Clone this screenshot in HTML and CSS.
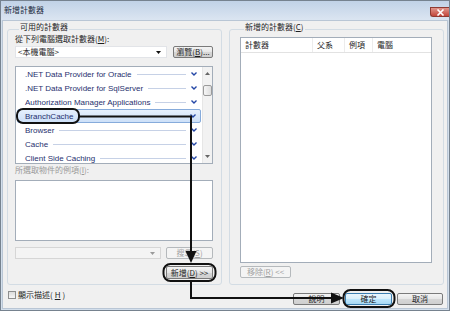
FILE: index.html
```html
<!DOCTYPE html>
<html>
<head lang="zh-Hant">
	<meta charset="utf-8">
	<title>新增計數器</title>
	<link rel="stylesheet" href="styles.css">
</head>
<body>

	<div class="window">
		<div class="titlebar">
			<span class="title">新增計數器</span>
			<span class="close">
				<svg width="9" height="7" viewBox="0 0 9 7"><path d="M1.5 0.5 L7.5 6.5 M7.5 0.5 L1.5 6.5" stroke="#fff" stroke-width="1.6"/></svg>
			</span>
		</div>

		<div class="client">
			<div class="groups">

				<!-- available counters -->
				<section class="group left">
					<div class="group-title">可用的計數器</div>
					<div class="label">從下列電腦選取計數器(<u>M</u>):</div>
					<div class="row">
						<div class="combo">&lt;本機電腦&gt;
							<svg class="drop" width="5" height="3" viewBox="0 0 5 3"><path d="M0 0 H5 L2.5 3 Z" fill="#111"/></svg>
						</div>
						<button class="btn browse">瀏覽(<u>B</u>)...</button>
					</div>

					<div class="counter-list">
						<ul class="items">
							<li><span class="name">.NET Data Provider for Oracle</span><span class="rule"></span><svg class="chev" width="6" height="4" viewBox="0 0 6 4"><path d="M0.5 0.5 L3 3 L5.5 0.5" fill="none" stroke="#2447a6" stroke-width="1.4"/></svg></li>
							<li><span class="name">.NET Data Provider for SqlServer</span><span class="rule"></span><svg class="chev" width="6" height="4" viewBox="0 0 6 4"><path d="M0.5 0.5 L3 3 L5.5 0.5" fill="none" stroke="#2447a6" stroke-width="1.4"/></svg></li>
							<li><span class="name">Authorization Manager Applications</span><span class="rule"></span><svg class="chev" width="6" height="4" viewBox="0 0 6 4"><path d="M0.5 0.5 L3 3 L5.5 0.5" fill="none" stroke="#2447a6" stroke-width="1.4"/></svg></li>
							<li class="selected"><span class="name">BranchCache</span><span class="rule"></span><svg class="chev" width="6" height="4" viewBox="0 0 6 4"><path d="M0.5 0.5 L3 3 L5.5 0.5" fill="none" stroke="#2447a6" stroke-width="1.4"/></svg></li>
							<li><span class="name">Browser</span><span class="rule"></span><svg class="chev" width="6" height="4" viewBox="0 0 6 4"><path d="M0.5 0.5 L3 3 L5.5 0.5" fill="none" stroke="#2447a6" stroke-width="1.4"/></svg></li>
							<li><span class="name">Cache</span><span class="rule"></span><svg class="chev" width="6" height="4" viewBox="0 0 6 4"><path d="M0.5 0.5 L3 3 L5.5 0.5" fill="none" stroke="#2447a6" stroke-width="1.4"/></svg></li>
							<li><span class="name">Client Side Caching</span><span class="rule"></span><svg class="chev" width="6" height="4" viewBox="0 0 6 4"><path d="M0.5 0.5 L3 3 L5.5 0.5" fill="none" stroke="#2447a6" stroke-width="1.4"/></svg></li>
						</ul>
						<div class="scrollbar">
							<svg class="arrow-up" width="5" height="3" viewBox="0 0 5 3"><path d="M0 3 H5 L2.5 0 Z" fill="#666"/></svg>
							<div class="thumb"></div>
							<svg class="arrow-down" width="5" height="3" viewBox="0 0 5 3"><path d="M0 0 H5 L2.5 3 Z" fill="#666"/></svg>
						</div>
					</div>

					<div class="label dim">所選取物件的例項(<u>I</u>):</div>
					<div class="instances"></div>
					<div class="row row-search">
						<div class="combo off">
							<svg class="drop" width="5" height="3" viewBox="0 0 5 3"><path d="M0 0 H5 L2.5 3 Z" fill="#9a9a9a"/></svg>
						</div>
						<button class="btn search" disabled>搜尋(<u>S</u>)</button>
					</div>
					<button class="btn add">新增(<u>D</u>) &gt;&gt;</button>
				</section>

				<!-- added counters -->
				<section class="group right">
					<div class="group-title">新增的計數器(<u>C</u>)</div>
					<div class="added-list">
						<div class="head">
							<span class="col c1">計數器</span>
							<span class="col c2">父系</span>
							<span class="col c3">例項</span>
							<span class="col c4">電腦</span>
						</div>
					</div>
					<button class="btn remove" disabled>移除(<u>R</u>) &lt;&lt;</button>
				</section>

			</div>

			<div class="footer">
				<label class="check"><span class="box"></span>顯示描述(<u>H</u>)</label>
				<div class="actions">
					<button class="btn">說明</button>
					<button class="btn default">確定</button>
					<button class="btn">取消</button>
				</div>
			</div>
		</div>

		<!-- callout marks drawn over the dialog -->
		<svg class="notes" width="450" height="312" viewBox="0 0 450 312">
			<g fill="none" stroke="#111" stroke-width="2">
				<rect x="17" y="109" width="62" height="14" rx="6"/>
				<path d="M79 116.5 H191 V252"/>
				<rect x="163.5" y="264" width="52" height="17" rx="7"/>
				<path d="M191 281 V298 H332"/>
				<rect x="343.5" y="290" width="51" height="17" rx="7"/>
			</g>
			<g fill="#111">
				<polygon points="185.5,251 196.5,251 191,263"/>
				<polygon points="331,292.5 331,303.5 344,298"/>
			</g>
		</svg>
	</div>

</body>
</html>
```

FILE: styles.css
```css
* {
	margin: 0;
	padding: 0;
	box-sizing: border-box;
}

body {
	width: 450px;
	height: 312px;
	overflow: hidden;
	background: #fff;
	font-family: "Noto Sans CJK TC", "Liberation Sans", sans-serif;
	font-size: 8px;
	color: #1e1e1e;
}

u {
	text-decoration: underline;
}

.window {
	position: relative;
	width: 450px;
	height: 311px;
	border: 1px solid #76828f;
	background: #d3dfec;
	display: flex;
	flex-direction: column;
}

/* title bar */
.titlebar {
	height: 19px;
	flex: none;
	display: flex;
	justify-content: space-between;
	align-items: flex-start;
	background: linear-gradient(#c1d2e7, #dbe5f1);
}

.title {
	line-height: 12px;
	margin: 3px 0 0 3px;
	color: #1b2a3c;
}

.close {
	width: 19px;
	height: 10px;
	margin-top: 6px;
	display: flex;
	align-items: center;
	justify-content: center;
	background: linear-gradient(#e0958c, #c3473c);
	border: 1px solid #8e3b33;
	border-right: 0;
	border-radius: 0 0 0 3px;
}

/* dialog body */
.client {
	flex: 1;
	margin: 0 1px 1px;
	border: 1px solid #b9c6d5;
	background: #f0f0f0;
	display: flex;
	flex-direction: column;
}

.groups {
	display: flex;
	gap: 7px;
	margin: 8px 0 0 4px;
}

.group {
	width: 215px;
	height: 256px;
	border: 1px solid #d3dce4;
	border-radius: 3px;
	display: flex;
	flex-direction: column;
}

.group-title {
	align-self: flex-start;
	margin: -9px 0 0 4px;
	padding: 0 1px;
	line-height: 12px;
	background: #f0f0f0;
}

.left {
	padding: 0 8px 0 7px;
}

.right {
	padding: 0 11px 0 10px;
}

.label {
	line-height: 12px;
}

.label.dim {
	color: #9b9b9b;
}

.row {
	display: flex;
	justify-content: space-between;
	height: 12px;
	margin-top: 1px;
}

.row-search {
	margin-top: 6px;
}

.combo {
	position: relative;
	width: 152px;
	height: 12px;
	padding-left: 2px;
	line-height: 10px;
	background: #fff;
	border: 1px solid #e2e4e8;
}

.combo .drop {
	position: absolute;
	right: 5px;
	top: 4px;
}

.combo.off {
	width: 146px;
	background: #f4f4f4;
	border-color: #d6d6d6;
}

/* buttons */
.btn {
	height: 12px;
	font: inherit;
	line-height: 10px;
	color: #1e1e1e;
	border: 1px solid #7a7a7a;
	border-radius: 2px;
	background: linear-gradient(#f4f4f4 0%, #e6e6e6 50%, #d6d6d6 51%, #cfcfcf 100%);
	text-align: center;
}

.btn:disabled {
	color: #a2a2a2;
	border-color: #b5b9bc;
	background: #f4f4f4;
}

.browse {
	width: 40px;
}

.search {
	width: 47px;
}

.add {
	align-self: flex-end;
	width: 47px;
	height: 13px;
	margin-top: 7px;
}

.remove {
	width: 51px;
	margin-top: 3px;
}

/* counter list */
.counter-list {
	margin-top: 8px;
	height: 98px;
	border: 1px solid #a3adb9;
	background: #fff;
	display: flex;
	overflow: hidden;
}

.items {
	flex: 1;
	list-style: none;
	font-family: "Liberation Sans", sans-serif;
	color: #27306e;
}

.items li {
	height: 14px;
	display: flex;
	align-items: center;
	padding: 0 5px 0 9px;
	white-space: nowrap;
}

.items .rule {
	flex: 1;
	height: 1px;
	margin: 0 5px;
	background: #c6d1e6;
}

.items .chev {
	flex: none;
}

.items li.selected {
	margin: 0 1px;
	padding: 0 4px 0 7px;
	border: 1px solid #86abdb;
	border-radius: 2px;
	background: linear-gradient(#e6f0fd, #cde0f8);
}

.items li.selected .rule {
	visibility: hidden;
}

.scrollbar {
	width: 10px;
	display: flex;
	flex-direction: column;
	align-items: center;
	background: #f2f2f2;
	border-left: 1px solid #e6e6e6;
}

.arrow-up {
	margin-top: 5px;
}

.thumb {
	width: 9px;
	height: 11px;
	margin-top: 10px;
	border: 1px solid #9b9b9b;
	border-radius: 2px;
	background: linear-gradient(to right, #f6f6f6, #dedede);
}

.arrow-down {
	margin-top: auto;
	margin-bottom: 5px;
}

.instances {
	margin-top: 4px;
	height: 61px;
	border: 1px solid #a3adb9;
	background: #fff;
}

/* added counters table */
.added-list {
	margin-top: 4px;
	height: 226px;
	border: 1px solid #a3adb9;
	background: #fff;
}

.head {
	display: flex;
	height: 15px;
	border-bottom: 1px solid #e2e2e2;
}

.col {
	line-height: 14px;
	padding-left: 4px;
	border-right: 1px solid #ececec;
}

.c1 { width: 72px; }
.c2 { width: 32px; }
.c3 { width: 28px; }
.c4 { flex: 1; border-right: 0; }

/* footer */
.footer {
	flex: 1;
	display: flex;
	align-items: flex-start;
	padding: 0 4px 0 5px;
}

.check {
	display: flex;
	align-items: center;
	gap: 2px;
	margin-top: 4px;
	line-height: 12px;
}

.check .box {
	width: 8px;
	height: 8px;
	border: 1px solid #8e8f8f;
	background: linear-gradient(#dcdcdc, #f6f6f6);
}

.actions {
	display: flex;
	gap: 5px;
	margin: 8px 0 0 auto;
}

.actions .btn {
	width: 47px;
}

.actions .btn:last-child {
	width: 46px;
}

.btn.default {
	border-color: #3c7fb1;
	background: linear-gradient(#eaf6fd 0%, #d9f0fc 50%, #bee6fd 51%, #a7d9f5 100%);
}

.notes {
	position: absolute;
	top: -1px;
	left: -1px;
	pointer-events: none;
}
```
